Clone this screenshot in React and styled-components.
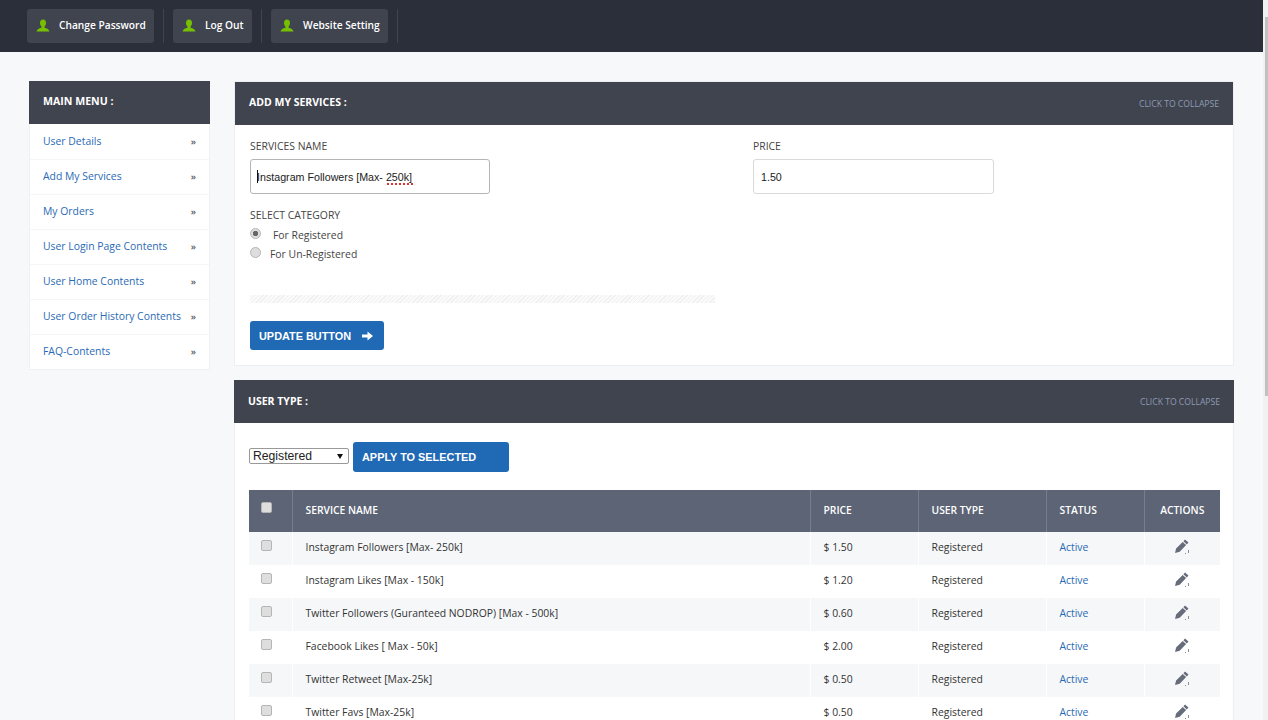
import React from "react";
import styled, { createGlobalStyle } from "styled-components";

const Global = createGlobalStyle`
  body { margin: 0; background: #f7f8fa; font-family: "Open Sans", sans-serif; font-size: 10.4px; color: #333; }
  * { box-sizing: border-box; }
`;

const Page = styled.div`
  width: 1263px;
`;
const ScrollTrack = styled.div`
  position: fixed; top: 0; right: 0; bottom: 0; width: 5px; background: #f1f1f1;
`;
const ScrollThumb = styled.div`
  position: absolute; top: 17px; right: 0; width: 3px; height: 379px; background: #c1c1c1;
`;
const TopBar = styled.header`
  height: 52px; background: #2b2f3a; display: flex; align-items: flex-start; padding: 9px 0 0 27px;
`;
const TopItem = styled.div`
  display: flex; height: 34px; padding-right: 9px; margin-right: 9px; border-right: 1px solid #40444f;
`;
const TopButton = styled.a`
  display: flex; align-items: center; height: 34px; background: #40444f; border-radius: 3px; white-space: nowrap;
  color: #fff; font-size: 10.2px; font-weight: 600; padding: 0 0 3px 9px; width: ${p => p.$w}px; gap: 9px;
  svg { margin-top: 3px; flex: none; }
`;
const Layout = styled.div`
  display: flex; align-items: flex-start; padding: 29px 29px 40px 29px; gap: 24px;
`;
const Sidebar = styled.aside`
  width: 181px; flex: none; background: #fff; border: 1px solid #f0f1f3; border-top: 0;
`;
const SideHead = styled.div`
  height: 43px; margin: 0 -1px; padding: 0 14px 3px; background: #40444f; color: #fff; font-weight: 700; font-size: 10.6px;
  display: flex; align-items: center;
`;
const SideLink = styled.a`
  display: flex; justify-content: space-between; align-items: center; height: 35px; padding: 0 13px 1px 13px;
  color: #2a6ab5; font-size: 10.4px;
  & + & { border-top: 1px solid #f5f6f8; padding-bottom: 2px; }
`;
const Chevron = styled.span`
  color: #555; font-size: 9.5px; font-weight: 600; margin-top: 1px;
`;
const Main = styled.main`
  flex: 1; min-width: 0; display: flex; flex-direction: column; gap: 14px;
`;
const FormPanel = styled.section`
  background: #fff; border: 1px solid #eceef1;
`;
const TablePanel = styled.section`
  background: #fff; border: 1px solid #eceef1; border-width: 0 1px 0 1px;
`;
const PanelHead = styled.div`
  height: 43px; margin: ${p => p.$flush ? "0 -1px" : "0"}; padding: 0 14px;
  background: #40444f; color: #fff; font-weight: 700; font-size: 10.5px;
  display: flex; align-items: center; justify-content: space-between;
`;
const HeadTitle = styled.span`
  margin-bottom: ${p => p.$b}px;
`;
const Collapse = styled.span`
  font-weight: 400; font-size: 8.6px; color: #8f9bb3;
`;
const FormBody = styled.form`
  height: 240px; padding: 14px 15px;
`;
const FormRow = styled.div`
  display: flex; gap: 263px;
`;
const Field = styled.label`
  display: flex; flex-direction: column; gap: 6px; font-size: 10.4px; color: #444; width: ${p => p.$w}px;
`;
const InputWrap = styled.div`
  position: relative; height: 35px;
`;
const TextInput = styled.input`
  width: 100%; height: 35px; border: 1px solid ${p => p.$focus ? "#b5b5b5" : "#d9d9d9"}; border-radius: 3px;
  padding: 0 ${p => p.$pad}px;
  font-family: "Liberation Sans", Arial, sans-serif; font-size: 10.7px; color: #222; background: #fff; outline: 0;
`;
const Caret = styled.i`
  position: absolute; left: 7px; top: 11px; width: 1px; height: 13px; background: #111;
`;
const Squiggle = styled.i`
  position: absolute; left: 137px; top: 24px; width: 27px; height: 2px;
  background: repeating-linear-gradient(90deg, #d33 0 2px, transparent 2px 4px);
`;
const CatLabel = styled.div`
  margin-top: 14px; font-size: 10.4px; color: #444; line-height: 14px;
`;
const RadioList = styled.div`
  margin-top: 4px;
`;
const RadioRow = styled.label`
  display: flex; align-items: flex-start; height: 19px; font-size: 10.4px; color: #444; line-height: 19px; gap: ${p => p.$gap}px;
`;
const Radio = styled.input`
  appearance: none; margin: 2px 0 0; width: 11px; height: 11px; flex: none; border-radius: 50%;
  border: 1px solid #b5b5b5; background: #dedede; position: relative;
  &:checked { background: radial-gradient(circle, #666 0 2.4px, #dedede 3px); }
`;
const Hatch = styled.div`
  width: 465px; height: 8px; margin-top: 31px;
  background: repeating-linear-gradient(135deg, #f0f0f0 0 1px, #fafafa 1px 3px);
`;
const UpdateBtn = styled.button`
  margin-top: 18px; display: flex; align-items: center; gap: 11px; height: 29px; width: 134px; padding: 0 9px;
  background: #1f69b5; color: #fff; border: 0; border-radius: 3px; font-family: "Liberation Sans", Arial, sans-serif;
  font-weight: 700; font-size: 10.9px;
`;
const TableBody = styled.div`
  padding: 19px 13px 0 14px;
`;
const Toolbar = styled.div`
  display: flex; align-items: flex-start; gap: 4px; margin-bottom: 18px;
`;
const SelectWrap = styled.div`
  position: relative; width: 100px; height: 16px; margin-top: 6px;
  &::after {
    content: ""; position: absolute; right: 6px; top: 6px; pointer-events: none;
    border-left: 3px solid transparent; border-right: 3px solid transparent; border-top: 5px solid #111;
  }
`;
const Select = styled.select`
  appearance: none; display: block; width: 100%; height: 16px; font-family: "Liberation Sans", Arial, sans-serif; font-size: 12.2px; line-height: 14px;
  padding: 0 0 0 3px; background: #fff; border: 1px solid #999; border-radius: 2px; color: #222; outline: 0;
`;
const ApplyBtn = styled.button`
  width: 156px; height: 30px; text-align: left; padding: 0 9px; background: #1f69b5; color: #fff; border: 0; border-radius: 3px;
  font-family: "Liberation Sans", Arial, sans-serif; font-weight: 700; font-size: 10.9px;
`;
const Table = styled.table`
  width: 971px; border-collapse: collapse; table-layout: fixed;
`;
const Th = styled.th`
  height: 42px; background: #5c6475; color: #fff; font-weight: 600; font-size: 10.3px; text-align: ${p => p.$center ? "center" : "left"};
  padding: 0 13px 2px; border-left: 1px solid #767d8c;
  &:first-child { border-left: 0; padding: 0 8px 9px 0; text-align: center; }
`;
const Tr = styled.tr`
  height: 33px; background: ${p => p.$odd ? "#f6f7f9" : "#fff"};
`;
const Td = styled.td`
  padding: 0 13px 3px; font-size: 10.4px; color: #333; border-left: 1px solid #fff; text-align: ${p => p.$center ? "center" : "left"};
  &:first-child { border-left: 0; padding: 0 8px 8px 0; text-align: center; }
`;
const Check = styled.input`
  appearance: none; display: inline-block; vertical-align: middle; margin: 0; width: 11px; height: 11px; border-radius: 2px;
  border: 1px solid #b5b5b5; background: #dedede;
`;
const ActiveLink = styled.a`
  color: #2a6ab5;
`;
const PencilWrap = styled.span`
  display: inline-block; height: 16px; margin-bottom: 2px;
`;

const User = () => (
  <svg width="14" height="14" viewBox="0 0 14 14" fill="#77c000"><path d="M7 .5c2 0 3 1.500 3 3.300 0 1.700-.7 3-1.400 3.700v1.300c1.900.5 4.200 1.200 4.900 3.700H.5c.7-2.500 3-3.200 4.900-3.700V7.500C4.700 6.800 4 5.500 4 3.800 4 2 5 .5 7 .5z"/></svg>
);
const Pencil = () => (
  <svg width="16" height="16" viewBox="0 0 16 16" fill="#666c7a"><path d="M11 1.500l3.500 3.100-1.700 1.800-3.400-3.200zM8.700 4l3.400 3.100-6.400 6.700-4.700 1.300 1.100-4.700z"/><path d="M11 15h1v1h-1zM14 12h1v3h-1z" fill="#8a8f9b"/></svg>
);
const Arrow = () => (
  <svg width="11" height="10" viewBox="0 0 11 10" fill="#fff"><path d="M0 3.500h5.500V.5L11 5 5.500 9.500v-3H0z"/></svg>
);

const menu = ["User Details", "Add My Services", "My Orders", "User Login Page Contents", "User Home Contents", "User Order History Contents", "FAQ-Contents"];
const rows = [
  ["Instagram Followers [Max- 250k]", "1.50"],
  ["Instagram Likes [Max - 150k]", "1.20"],
  ["Twitter Followers (Guranteed NODROP) [Max - 500k]", "0.60"],
  ["Facebook Likes [ Max - 50k]", "2.00"],
  ["Twitter Retweet [Max-25k]", "0.50"],
  ["Twitter Favs [Max-25k]", "0.50"],
];

export default function App() {
  return (
    <Page>
      <Global />
      <ScrollTrack><ScrollThumb /></ScrollTrack>
      <TopBar>
        <TopItem><TopButton $w={127}><User />Change Password</TopButton></TopItem>
        <TopItem><TopButton $w={79}><User />Log Out</TopButton></TopItem>
        <TopItem><TopButton $w={117}><User />Website Setting</TopButton></TopItem>
      </TopBar>
      <Layout>
        <Sidebar>
          <SideHead>MAIN MENU :</SideHead>
          {menu.map(m => <SideLink key={m}>{m}<Chevron>»</Chevron></SideLink>)}
        </Sidebar>
        <Main>
          <FormPanel>
            <PanelHead><HeadTitle $b={4}>ADD MY SERVICES :</HeadTitle><Collapse>CLICK TO COLLAPSE</Collapse></PanelHead>
            <FormBody>
              <FormRow>
                <Field $w={240}>SERVICES NAME
                  <InputWrap>
                    <TextInput $focus $pad={6} spellCheck={false} defaultValue="Instagram Followers [Max- 250k]" />
                    <Caret /><Squiggle />
                  </InputWrap>
                </Field>
                <Field $w={241}>PRICE
                  <InputWrap><TextInput $pad={7} spellCheck={false} defaultValue="1.50" /></InputWrap>
                </Field>
              </FormRow>
              <CatLabel>SELECT CATEGORY</CatLabel>
              <RadioList>
                <RadioRow $gap={12}><Radio type="radio" name="cat" defaultChecked />For Registered</RadioRow>
                <RadioRow $gap={9}><Radio type="radio" name="cat" />For Un-Registered</RadioRow>
              </RadioList>
              <Hatch />
              <UpdateBtn type="button">UPDATE BUTTON <Arrow /></UpdateBtn>
            </FormBody>
          </FormPanel>
          <TablePanel>
            <PanelHead $flush><HeadTitle $b={2}>USER TYPE :</HeadTitle><Collapse>CLICK TO COLLAPSE</Collapse></PanelHead>
            <TableBody>
              <Toolbar>
                <SelectWrap>
                  <Select defaultValue="Registered"><option>Registered</option><option>Un-Registered</option></Select>
                </SelectWrap>
                <ApplyBtn type="button">APPLY TO SELECTED</ApplyBtn>
              </Toolbar>
              <Table>
                <colgroup>
                  <col width="43" /><col width="518" /><col width="108" /><col width="128" /><col width="98" /><col width="76" />
                </colgroup>
                <thead>
                  <tr>
                    <Th><Check type="checkbox" /></Th>
                    <Th>SERVICE NAME</Th><Th>PRICE</Th><Th>USER TYPE</Th><Th>STATUS</Th><Th $center>ACTIONS</Th>
                  </tr>
                </thead>
                <tbody>
                  {rows.map((r, i) => (
                    <Tr key={i} $odd={i % 2 === 0}>
                      <Td><Check type="checkbox" /></Td>
                      <Td>{r[0]}</Td>
                      <Td>$ {r[1]}</Td>
                      <Td>Registered</Td>
                      <Td><ActiveLink>Active</ActiveLink></Td>
                      <Td $center><PencilWrap><Pencil /></PencilWrap></Td>
                    </Tr>
                  ))}
                </tbody>
              </Table>
            </TableBody>
          </TablePanel>
        </Main>
      </Layout>
    </Page>
  );
}
